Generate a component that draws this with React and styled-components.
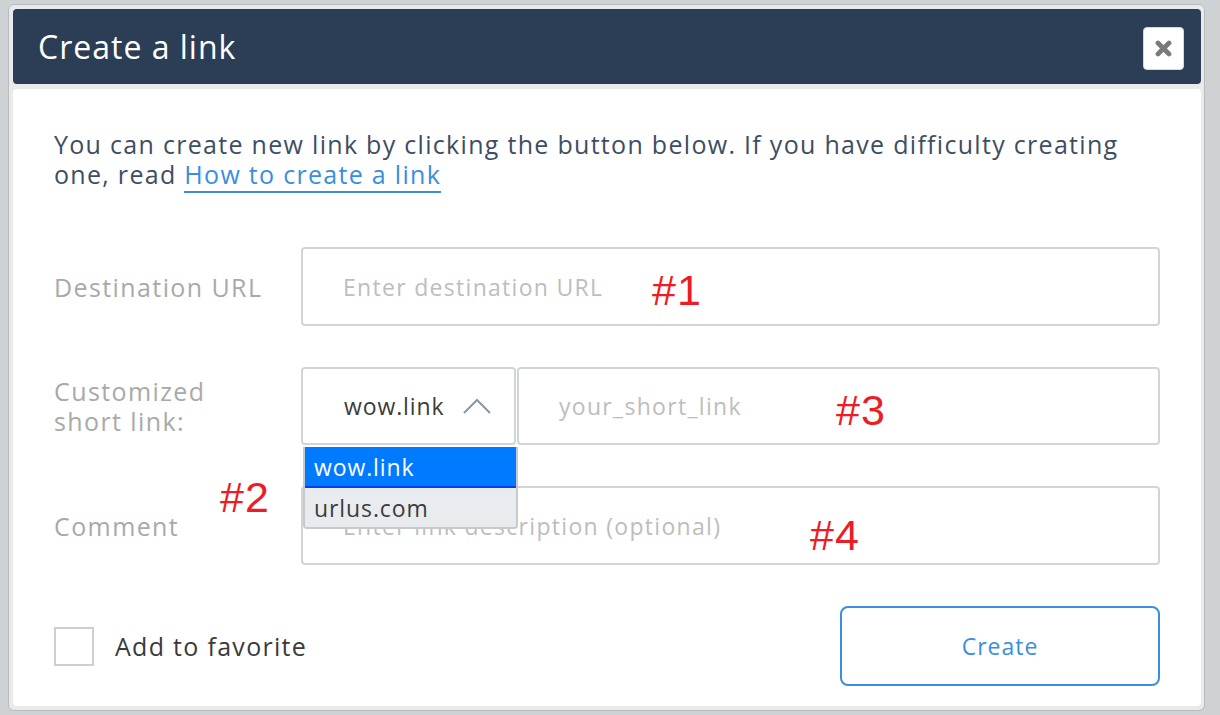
import React from 'react';
import styled, { createGlobalStyle } from 'styled-components';

const Global = createGlobalStyle`
  html, body {
    margin: 0;
    padding: 0;
    background: #cfd2d4;
    font-family: "Open Sans", "Liberation Sans", sans-serif;
  }
  * { box-sizing: border-box; }
`;

const Page = styled.div`
  width: 1220px;
  height: 715px;
  padding: 4px 15px 4px 8px;
`;

const Frame = styled.div`
  height: 707px;
  background: #e9eaeb;
  border: 1px solid #b8bbbd;
  border-radius: 6px;
  padding: 4px 3px 4px 4px;
  display: flex;
  flex-direction: column;
  gap: 5px;
`;

const Header = styled.div`
  height: 75px;
  background: #2c3e56;
  border-radius: 4px;
  display: flex;
  align-items: center;
  justify-content: space-between;
  padding: 0 17px 0 25px;
`;

const Title = styled.h1`
  margin: 0;
  font-size: 32px;
  font-weight: 400;
  color: #ffffff;
  letter-spacing: 1px;
`;

const CloseBtn = styled.button`
  width: 41px;
  height: 43px;
  margin-top: 4px;
  background: #ffffff;
  border: 1px solid #d6d8da;
  border-radius: 4px;
  display: flex;
  align-items: center;
  justify-content: center;
  padding: 0;
`;

const Body = styled.div`
  flex: 1;
  background: #ffffff;
  border-radius: 4px;
  padding: 40px 41px 0 41px;
`;

const Intro = styled.p`
  margin: 0 0 58px 0;
  font-size: 25px;
  line-height: 30px;
  letter-spacing: 1.3px;
  color: #3d4e63;
  white-space: nowrap;
`;

const HelpLink = styled.a`
  color: #3a8ee0;
  text-decoration: none;
  border-bottom: 2px solid #3a8ee0;
`;

const Form = styled.div`
  display: flex;
  flex-direction: column;
  gap: 41px;
`;

const Row = styled.div`
  display: grid;
  grid-template-columns: 247px 1fr;
  align-items: center;
  position: relative;
`;

const Label = styled.div`
  font-size: 25px;
  line-height: 30px;
  letter-spacing: 1.4px;
  color: #a9a9a9;
`;

const Field = styled.div`
  height: ${p => p.h || 79}px;
  border: 2px solid #d2d5d8;
  border-radius: 4px;
  display: flex;
  align-items: center;
  padding-left: 40px;
  font-size: 23px;
  letter-spacing: 1.3px;
  color: #bdbdbd;
  position: relative;
  flex: ${p => (p.grow ? 1 : 'none')};
`;

const Split = styled.div`
  display: flex;
  gap: 1px;
`;

const Select = styled.div`
  width: 215px;
  height: 78px;
  border: 2px solid #d2d5d8;
  border-radius: 4px;
  display: flex;
  align-items: center;
  padding-left: 41px;
  gap: 18px;
  font-size: 23px;
  letter-spacing: 0.9px;
  color: #3c3c3c;
  position: relative;
`;

const Menu = styled.div`
  position: absolute;
  left: 0;
  top: 78px;
  width: 215px;
  border: 2px solid #c7cacd;
  border-top: none;
  border-radius: 0 0 4px 4px;
  background: #e9ecef;
  z-index: 5;
  overflow: hidden;
`;

const Option = styled.div`
  height: ${p => (p.active ? 41 : 39)}px;
  display: flex;
  align-items: center;
  padding-left: 9px;
  font-size: 23px;
  letter-spacing: 0.9px;
  color: ${p => (p.active ? '#ffffff' : '#3c3c3c')};
  background: ${p => (p.active ? '#007bff' : '#e9ecef')};
  border-bottom: ${p => (p.active ? '2px solid #0a3cf0' : 'none')};
`;

const Note = styled.span`
  position: absolute;
  left: ${p => p.x}px;
  top: ${p => p.y}px;
  font-family: "Liberation Sans", "DejaVu Sans", sans-serif;
  font-size: 43px;
  line-height: 1;
  letter-spacing: 1px;
  color: #ee1c24;
  z-index: 6;
`;

const Footer = styled.div`
  margin-top: 41px;
  display: flex;
  align-items: center;
  justify-content: space-between;
`;

const Check = styled.label`
  display: flex;
  align-items: center;
  gap: 21px;
  font-size: 25px;
  letter-spacing: 1.3px;
  color: #3a3a3a;
`;

const Box = styled.span`
  width: 40px;
  height: 39px;
  border: 2px solid #cfcfcf;
  display: block;
`;

const CreateBtn = styled.button`
  width: 320px;
  height: 80px;
  border: 2px solid #3a8ee0;
  border-radius: 8px;
  background: #ffffff;
  color: #3a8ee0;
  font-family: inherit;
  font-size: 23px;
  letter-spacing: 1px;
`;

const Chevron = () => (
  <svg width="28" height="16" viewBox="0 0 28 16">
    <path d="M1 15 L14 2 L27 15" fill="none" stroke="#8a96a3" strokeWidth="2" />
  </svg>
);

const Cross = () => (
  <svg width="17" height="17" viewBox="0 0 20 20">
    <path d="M3.5 3.5 L16.5 16.5 M16.5 3.5 L3.5 16.5" stroke="#7a7a7a" strokeWidth="5.5" strokeLinecap="round" />
  </svg>
);

export default function App() {
  return (
    <Page>
      <Global />
      <Frame>
        <Header>
          <Title>Create a link</Title>
          <CloseBtn><Cross /></CloseBtn>
        </Header>
        <Body>
          <Intro>
            You can create new link by clicking the button below. If you have difficulty creating
            <br />
            one, read <HelpLink href="#">How to create a link</HelpLink>
          </Intro>
          <Form>
            <Row>
              <Label>Destination URL</Label>
              <Field>
                Enter destination URL
                <Note x={349} y={20}>#1</Note>
              </Field>
            </Row>
            <Row>
              <Label>Customized<br />short link:</Label>
              <Split>
                <Select>
                  wow.link <Chevron />
                  <Menu>
                    <Option active>wow.link</Option>
                    <Option>urlus.com</Option>
                  </Menu>
                </Select>
                <Field h={78} grow>
                  your_short_link
                  <Note x={317} y={20}>#3</Note>
                </Field>
              </Split>
            </Row>
            <Row>
              <Label>Comment</Label>
              <Field>
                Enter link description (optional)
                <Note x={507} y={26}>#4</Note>
              </Field>
              <Note x={166} y={-10}>#2</Note>
            </Row>
          </Form>
          <Footer>
            <Check><Box />Add to favorite</Check>
            <CreateBtn>Create</CreateBtn>
          </Footer>
        </Body>
      </Frame>
    </Page>
  );
}
